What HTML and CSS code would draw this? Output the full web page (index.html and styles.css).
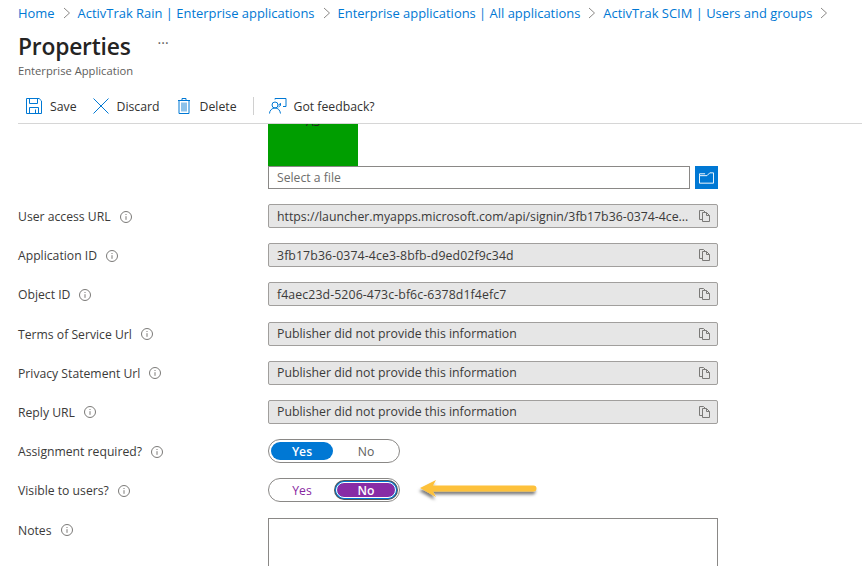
FILE: index.html
```html
<!DOCTYPE html>
<html lang="en">
<head>
<meta charset="utf-8">
<title>Properties</title>
<link rel="stylesheet" href="styles.css">
</head>
<body>
<nav class="crumbs">
  <a>Home</a><svg class="chev" viewBox="0 0 8 12"><path d="M1 1l5.5 5L1 11"/></svg>
  <a>ActivTrak Rain | Enterprise applications</a><svg class="chev" viewBox="0 0 8 12"><path d="M1 1l5.5 5L1 11"/></svg>
  <a>Enterprise applications | All applications</a><svg class="chev" viewBox="0 0 8 12"><path d="M1 1l5.5 5L1 11"/></svg>
  <a>ActivTrak SCIM | Users and groups</a><svg class="chev" viewBox="0 0 8 12"><path d="M1 1l5.5 5L1 11"/></svg>
</nav>
<header class="head">
  <div class="title-row"><h1>Properties</h1><span class="more">···</span></div>
  <p class="sub">Enterprise Application</p>
</header>
<div class="toolbar">
  <button class="tool tool-save"><svg class="ico" viewBox="0 0 16 16"><path d="M.5.5h12.6l2.4 2.4v12.6H.5z"/><path d="M3.5.5v5h8v-5M3.5 15.5v-6h9v6M9.5 11.5v4"/></svg>Save</button>
  <button class="tool tool-discard"><svg class="ico" viewBox="0 0 16 16"><path d="M.5.5l15 15M15.500.5l-15 15"/></svg>Discard</button>
  <button class="tool tool-delete"><svg class="ico ico-trash" viewBox="0 0 14 16"><path d="M1 2.500h12M5 2.500V.5h4v2M2 2.500h10v13H2z"/><path class="fill" d="M4 4.500h6v9H4z"/></svg>Delete</button>
  <span class="sep"></span>
  <button class="tool tool-fb"><svg class="ico ico-fb" viewBox="0 0 18 16"><path d="M6 1.500V.5h11v8h-3"/><path d="M9.500 7l2-1.500v2M11.500 5.500c0 1.500-.5 3-2 3.500"/><circle cx="6" cy="7" r="3"/><path d="M.5 15.500c0-3 2.500-5.500 5.500-5.500s5 2 5.500 5.500"/></svg>Got feedback?</button>
</div>
<main class="form">
  <div class="upload">
    <div class="logo"><span>AS</span></div>
    <div class="file-row">
      <div class="file-input">Select a file</div>
      <div class="file-btn"><svg viewBox="0 0 16 12"><path d="M.5 3.500h8l3-3h4v11H.5zM.5 3.500v-2h6"/></svg></div>
    </div>
  </div>

  <div class="row">
    <label>User access URL<svg class="info" viewBox="0 0 12 12"><circle cx="6" cy="6" r="5.500"/><path d="M6 5.200v3.600M6 3v1"/></svg></label>
    <div class="ro"><span>https://launcher.myapps.microsoft.com/api/signin/3fb17b36-0374-4ce...</span><svg class="copy" viewBox="0 0 11 12"><path d="M3.500 2.500h4l3 3v6h-7zM7.500 2.500v3h3M3.500 9.500h-3v-9h4l2 2"/></svg></div>
  </div>
  <div class="row">
    <label>Application ID<svg class="info" viewBox="0 0 12 12"><circle cx="6" cy="6" r="5.500"/><path d="M6 5.200v3.600M6 3v1"/></svg></label>
    <div class="ro"><span class="hex">3fb17b36-0374-4ce3-8bfb-d9ed02f9c34d</span><svg class="copy" viewBox="0 0 11 12"><path d="M3.500 2.500h4l3 3v6h-7zM7.500 2.500v3h3M3.500 9.500h-3v-9h4l2 2"/></svg></div>
  </div>
  <div class="row">
    <label>Object ID<svg class="info" viewBox="0 0 12 12"><circle cx="6" cy="6" r="5.500"/><path d="M6 5.200v3.600M6 3v1"/></svg></label>
    <div class="ro"><span class="hex">f4aec23d-5206-473c-bf6c-6378d1f4efc7</span><svg class="copy" viewBox="0 0 11 12"><path d="M3.500 2.500h4l3 3v6h-7zM7.500 2.500v3h3M3.500 9.500h-3v-9h4l2 2"/></svg></div>
  </div>
  <div class="row">
    <label>Terms of Service Url<svg class="info" viewBox="0 0 12 12"><circle cx="6" cy="6" r="5.500"/><path d="M6 5.200v3.600M6 3v1"/></svg></label>
    <div class="ro"><span>Publisher did not provide this information</span><svg class="copy" viewBox="0 0 11 12"><path d="M3.500 2.500h4l3 3v6h-7zM7.500 2.500v3h3M3.500 9.500h-3v-9h4l2 2"/></svg></div>
  </div>
  <div class="row">
    <label>Privacy Statement Url<svg class="info" viewBox="0 0 12 12"><circle cx="6" cy="6" r="5.500"/><path d="M6 5.200v3.600M6 3v1"/></svg></label>
    <div class="ro"><span>Publisher did not provide this information</span><svg class="copy" viewBox="0 0 11 12"><path d="M3.500 2.500h4l3 3v6h-7zM7.500 2.500v3h3M3.500 9.500h-3v-9h4l2 2"/></svg></div>
  </div>
  <div class="row">
    <label>Reply URL<svg class="info" viewBox="0 0 12 12"><circle cx="6" cy="6" r="5.500"/><path d="M6 5.200v3.600M6 3v1"/></svg></label>
    <div class="ro"><span>Publisher did not provide this information</span><svg class="copy" viewBox="0 0 11 12"><path d="M3.500 2.500h4l3 3v6h-7zM7.500 2.500v3h3M3.500 9.500h-3v-9h4l2 2"/></svg></div>
  </div>
  <div class="row">
    <label>Assignment required?<svg class="info" viewBox="0 0 12 12"><circle cx="6" cy="6" r="5.500"/><path d="M6 5.200v3.600M6 3v1"/></svg></label>
    <div class="toggle"><span class="opt on-blue">Yes</span><span class="opt">No</span></div>
  </div>
  <div class="row row-visible">
    <label>Visible to users?<svg class="info" viewBox="0 0 12 12"><circle cx="6" cy="6" r="5.500"/><path d="M6 5.200v3.600M6 3v1"/></svg></label>
    <div class="toggle"><span class="opt purple">Yes</span><span class="opt on-purple">No</span></div>
    <svg class="arrow" viewBox="0 0 128 26"><defs><filter id="sh" x="-10%" y="-40%" width="120%" height="200%"><feDropShadow dx="-1" dy="3" stdDeviation="1.800" flood-color="#000" flood-opacity=".5"/></filter></defs><path filter="url(#sh)" d="M4 11l16-8-3 5.500h100.500a3 3 0 0 1 0 6H17l3 5.500z"/></svg>
  </div>
  <div class="row row-notes">
    <label>Notes<svg class="info" viewBox="0 0 12 12"><circle cx="6" cy="6" r="5.500"/><path d="M6 5.200v3.600M6 3v1"/></svg></label>
    <div class="notes"></div>
  </div>
</main>
</body>
</html>
```
FILE: styles.css
```css
* { box-sizing: border-box; }
html, body { margin: 0; height: 566px; overflow: hidden; background: #fff; }
body {
  font-family: "Open Sans", "Noto Sans", "Liberation Sans", sans-serif;
  font-size: 12.2px;
  color: #323130;
  padding-left: 18px;
}
.crumbs {
  display: flex;
  align-items: center;
  height: 26px;
  font-size: 12.95px;
  color: #0078d4;
  white-space: nowrap;
}
.chev { width: 8px; height: 12px; margin: 0 7px 0 8px; }
.chev path { fill: none; stroke: #8a8886; stroke-width: 1; }
.head { height: 59px; }
.title-row { display: flex; align-items: center; height: 36px; padding-top: 4px; }
h1 { margin: 0; font-size: 22.8px; font-weight: 600; color: #252423; letter-spacing: -.2px; }
.more { margin-left: 27px; font-size: 14px; line-height: 1; color: #605e5c; margin-top: -6px; }
.sub { margin: 1px 0 0; font-size: 11.2px; color: #605e5c; }
.toolbar {
  display: flex;
  align-items: center;
  height: 39px;
  border-bottom: 1px solid #d6d6d6;
  padding-left: 8px;
  padding-top: 4px;
}
.tool {
  display: flex;
  align-items: center;
  padding: 0;
  border: 0;
  background: none;
  font: inherit;
  font-size: 12.25px;
  color: #323130;
}
.ico { width: 16px; height: 16px; margin-right: 8px; }
.ico path, .ico circle { fill: none; stroke: #0078d4; stroke-width: 1; }
.ico .fill { fill: #8cc2ea; stroke: none; }
.ico-trash { width: 14px; margin-right: 9px; }
.ico-fb { width: 18px; margin-right: 7px; }
.tool-discard { margin-left: 16px; }
.tool-delete { margin-left: 17px; }
.sep { width: 1px; height: 18px; background: #d0d0d0; margin: 0 15px 0 16px; }
.form { display: flex; flex-direction: column; width: 700px; }
.upload { margin-left: 250px; height: 80px; flex: none; }
.logo { width: 90px; height: 42px; background: #009e00; overflow: hidden; text-align: center; font-size: 12px; color: #222; }
.logo span { display: block; margin-top: -9px; line-height: 14px; }
.file-row { display: flex; gap: 5px; }
.file-input {
  width: 422px;
  height: 23px;
  border: 1px solid #8a8886;
  padding: 0 8px;
  line-height: 21px;
  color: #6e6d6b;
}
.file-btn { display: flex; align-items: center; justify-content: center; width: 23px; height: 23px; background: #0078d4; }
.file-btn svg { width: 15px; height: 12px; }
.file-btn path { fill: none; stroke: #fff; stroke-width: 1; }
.row { display: grid; grid-template-columns: 250px 450px; height: 39.2px; flex: none; align-items: start; position: relative; }
.row label { display: flex; align-items: center; height: 24px; padding-top: 1px; color: #3b3a39; }
.info { width: 12px; height: 12px; margin-left: 9px; flex: none; }
.info circle, .info path { fill: none; stroke: #7a7977; stroke-width: 1; }
.ro {
  display: flex;
  align-items: center;
  justify-content: space-between;
  height: 24px;
  padding: 0 7px 0 8px;
  background: #e6e6e6;
  border: 1px solid #a19f9d;
  border-radius: 2px;
  color: #3b3a39;
  font-size: 12.3px;
  white-space: nowrap;
}
.hex { letter-spacing: .1px; }
.copy { width: 11px; height: 12px; flex: none; }
.copy path { fill: none; stroke: #7a7977; stroke-width: 1; }
.toggle {
  display: flex;
  align-items: center;
  justify-content: space-between;
  width: 132px;
  height: 24px;
  padding: 0 2px;
  border: 1px solid #8a8886;
  border-radius: 12px;
}
.opt { display: flex; align-items: center; justify-content: center; width: 62px; height: 18px; border-radius: 9px; color: #605e5c; }
.on-blue { background: #0078d4; color: #fff; font-weight: 600; }
.purple { color: #88279f; }
.on-purple { background: #882ca5; color: #fff; font-weight: 600; outline: 1px solid #fff; box-shadow: 0 0 0 2px #0078d4, 0 0 0 3px #555; width: 58px; height: 14px; margin-right: 2px; }
.arrow { position: absolute; left: 398px; top: -1px; width: 128px; height: 26px; }
.arrow path { fill: #fdc13a; }
.row-notes { height: auto; }
.notes { height: 60px; border: 1px solid #8a8886; }
```
